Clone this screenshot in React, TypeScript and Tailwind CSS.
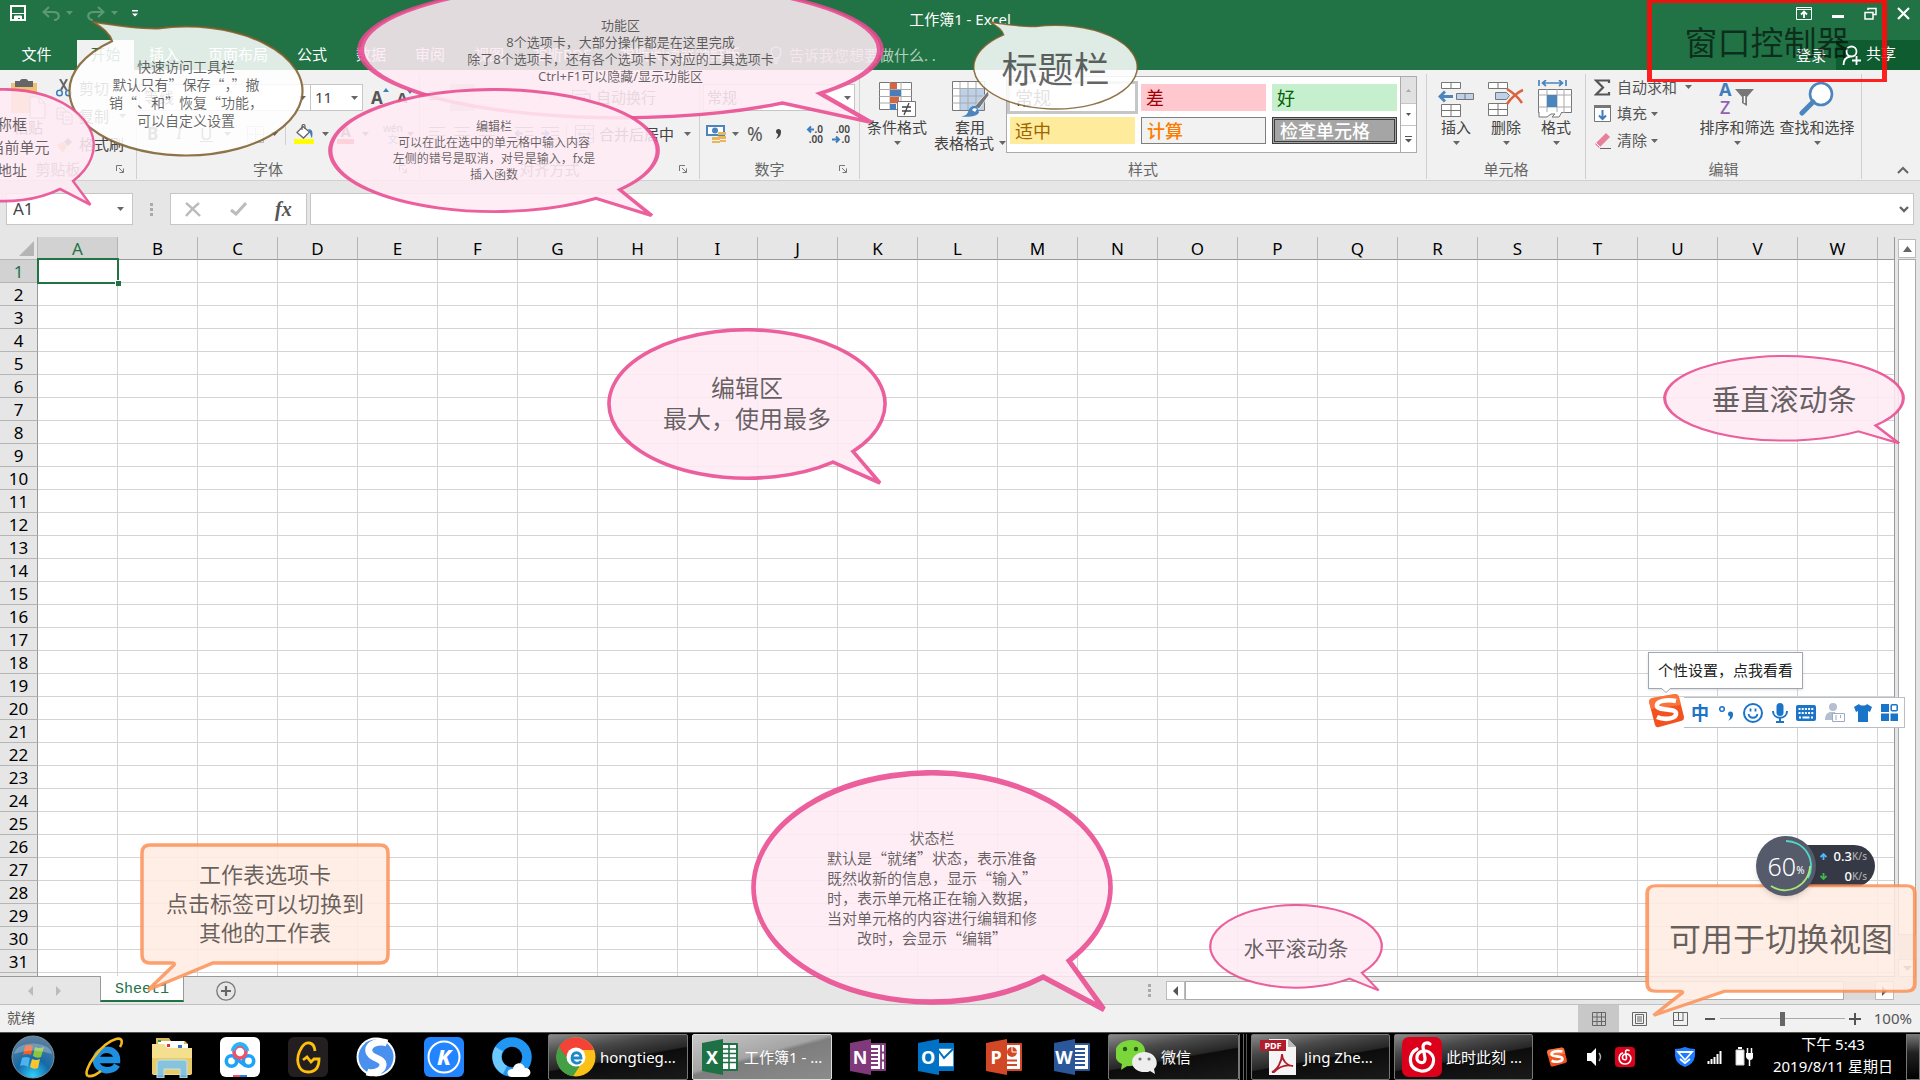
import React from "react";

const COLUMNS = "ABCDEFGHIJKLMNOPQRSTUVWXYZ".split("");
const ROWS = Array.from({ length: 32 }, (_, i) => i + 1);

/* ---------- small shared pieces ---------- */

function Svg({ w, h, vb, children, className = "" }: { w: number; h: number; vb?: string; children: React.ReactNode; className?: string }) {
  return (
    <svg width={w} height={h} viewBox={vb ?? `0 0 ${w} ${h}`} fill="none" aria-hidden="true" className={"shrink-0 " + className}>
      {children}
    </svg>
  );
}

function Caret({ className = "text-[#666]" }: { className?: string }) {
  return (
    <Svg w={7} h={4} className={className}>
      <path d="M0 0h7L3.500 4z" fill="currentColor" />
    </Svg>
  );
}

function Sep() {
  return <span className="h-[22px] w-px shrink-0 bg-[#d0d0d0]" />;
}

function Launcher() {
  return (
    <button aria-label="对话框启动器" className="flex justify-center text-[#777]">
      <Svg w={8} h={8}>
        <path d="M.5 6V.5H6M3 3l4 4M7.500 3.500v4h-4" stroke="currentColor" />
      </Svg>
    </button>
  );
}

function Group({ label, className, children, launcher = false }: { label: string; className: string; children: React.ReactNode; launcher?: boolean }) {
  return (
    <section className={"flex shrink-0 flex-col pt-1 pb-1 " + className} aria-label={label}>
      <div className="flex h-[105px] flex-col border-r border-[#d0d0d0]">
        <div className="h-[86px]">{children}</div>
        <div className="flex h-[20px] items-center text-[15px] leading-5 text-[#666]">
          <span className="flex-1 text-center">{label}</span>
          {launcher && <span className="w-5"><Launcher /></span>}
        </div>
      </div>
    </section>
  );
}

function BigButton({ icon, lines, caret = true, className = "" }: { icon: React.ReactNode; lines: string[]; caret?: boolean; className?: string }) {
  return (
    <button className={"flex shrink-0 flex-col items-center text-[15px] leading-4 text-[#444] " + className}>
      <span className="flex h-[41px] items-center justify-center">{icon}</span>
      <span className="whitespace-nowrap">{lines[0]}</span>
      <span className="flex h-4 items-center gap-[5px] whitespace-nowrap">
        {lines[1]}
        {caret && <Caret />}
      </span>
    </button>
  );
}

/* ---------- callouts ---------- */

function PinkBubble({ className, children }: { className: string; children: React.ReactNode }) {
  return (
    <div className={"absolute isolate flex flex-col items-center justify-center text-center whitespace-nowrap text-black/60 " + className}>
      <svg viewBox="0 0 280 158" preserveAspectRatio="none" fill="none" aria-hidden="true" className="absolute inset-0 -z-10 h-full w-full">
        <path
          d="M226 134.030L273 155L246 123.510A138 74.200 0 1 0 226 134.030z"
          fill="#feeaf3"
          fillOpacity=".87"
          stroke="#e84a90"
          strokeOpacity=".88"
          strokeWidth="3.600"
        />
      </svg>
      {children}
    </div>
  );
}

function WhiteBubble({ className, children }: { className: string; children: React.ReactNode }) {
  return (
    <div className={"absolute isolate flex flex-col items-center justify-center text-center whitespace-nowrap text-black/60 " + className}>
      <svg viewBox="0 0 238 137" preserveAspectRatio="none" fill="none" aria-hidden="true" className="absolute inset-0 -z-10 h-full w-full">
        <path
          d="M45 21.180Q42 11 25 1.500Q70 9 91 8.390A116.500 64.500 0 1 1 45 21.180z"
          fill="#fff"
          fillOpacity=".86"
          stroke="#7a5c28"
          strokeOpacity=".85"
          strokeWidth="2.200"
        />
      </svg>
      {children}
    </div>
  );
}

function OrangeBubble({ className, children }: { className: string; children: React.ReactNode }) {
  return (
    <div className={"absolute isolate flex flex-col items-center justify-center text-center whitespace-nowrap text-black/60 " + className}>
      <svg viewBox="0 0 250 150" preserveAspectRatio="none" fill="none" aria-hidden="true" className="absolute inset-0 -z-10 h-full w-full">
        <path
          d="M10 2H240Q248 2 248 10V112Q248 120 240 120H73L8 147L34 122Q35 120 32 120H10Q2 120 2 112V10Q2 2 10 2z"
          fill="#ffebe1"
          fillOpacity=".87"
          stroke="#fb8c50"
          strokeOpacity=".82"
          strokeWidth="3.500"
        />
      </svg>
      {children}
    </div>
  );
}

function Callouts() {
  return (
    <div className="pointer-events-none absolute inset-0 isolate overflow-hidden">
      <PinkBubble className="top-[-20px] left-[357px] h-[145px] w-[527px] pb-1 text-[13px] leading-[17px]">
        <p>功能区</p>
        <p>8个选项卡，大部分操作都是在这里完成</p>
        <p>除了8个选项卡，还有各个选项卡下对应的工具选项卡</p>
        <p>Ctrl+F1可以隐藏/显示功能区</p>
      </PinkBubble>
      <PinkBubble className="top-[88px] left-[328px] h-[130px] w-[332px] pb-1 text-[12px] leading-4">
        <p>编辑栏</p>
        <p>可以在此在选中的单元格中输入内容</p>
        <p>左侧的错号是取消，对号是输入，fx是</p>
        <p>插入函数</p>
      </PinkBubble>
      <WhiteBubble className="top-[20px] left-[67px] h-[137px] w-[238px] pt-2 font-['Noto_Sans_CJK_SC',sans-serif] text-[14px] leading-[18px]">
        <p>快速访问工具栏</p>
        <p>默认只有”保存“，”撤</p>
        <p>销“、和”恢复“功能，</p>
        <p>可以自定义设置</p>
      </WhiteBubble>
      <WhiteBubble className="top-[21px] left-[972px] h-[89px] w-[167px] pt-2 text-[36px] leading-10">
        <p>标题栏</p>
      </WhiteBubble>
      <PinkBubble className="top-[88px] left-[-86px] h-[119px] w-[181px] text-[15px] leading-[23px]">
        <p>名称框</p>
        <p>显示当前单元</p>
        <p>格地址</p>
      </PinkBubble>
      <PinkBubble className="top-[328px] left-[607px] h-[158px] w-[280px] pb-2 text-[24px] leading-[31px]">
        <p>编辑区</p>
        <p>最大，使用最多</p>
      </PinkBubble>
      <PinkBubble className="top-[355px] right-[15px] h-[90px] w-[242px] text-[29px] leading-8">
        <p>垂直滚动条</p>
      </PinkBubble>
      <PinkBubble className="bottom-[66px] left-[751px] h-[244px] w-[362px] pb-2 font-['Noto_Sans_CJK_SC',sans-serif] text-[15px] leading-5">
        <p>状态栏</p>
        <p>默认是“就绪”状态，表示准备</p>
        <p>既然收新的信息，显示“输入”</p>
        <p>时，表示单元格正在输入数据，</p>
        <p>当对单元格的内容进行编辑和修</p>
        <p>改时，会显示“编辑”</p>
      </PinkBubble>
      <PinkBubble className="right-[537px] bottom-[88px] h-[88px] w-[174px] text-[21px] leading-6">
        <p>水平滚动条</p>
      </PinkBubble>
      <OrangeBubble className="bottom-[87px] left-[140px] h-[150px] w-[250px] pb-[30px] text-[22px] leading-[29px]">
        <p>工作表选项卡</p>
        <p>点击标签可以切换到</p>
        <p>其他的工作表</p>
      </OrangeBubble>
      <OrangeBubble className="right-[3px] bottom-[62px] h-[134px] w-[272px] pb-6 text-[32px] leading-10">
        <p>可用于切换视图</p>
      </OrangeBubble>
      <div className="absolute top-0 right-[33px] flex h-[82px] w-[240px] items-center justify-center border-x-[5px] border-y-[3px] border-[#ff0a0a]/90 pt-1 text-[33px] leading-10 text-black/60">
        窗口控制器
      </div>
    </div>
  );
}

/* ---------- title bar and tabs ---------- */

function TitleBar() {
  return (
    <header className="grid h-10 grid-cols-[1fr_auto_1fr] items-start bg-[#217346] text-white">
      <div className="flex items-center pt-[5px] pl-[10px]">
        <button aria-label="保存">
          <Svg w={16} h={16}>
            <path d="M1 1h14v14H1z" stroke="#fff" strokeWidth="2" />
            <path d="M2 8.500h12M4.500 15v-4h7v4" stroke="#fff" />
            <path d="M4 11h8v5h-2v-3H8v3H4z" fill="#fff" />
          </Svg>
        </button>
        <button aria-label="撤消" className="ml-4 flex items-center gap-[6px] text-[#5c9876]">
          <Svg w={18} h={15}>
            <path d="M7 1L1.500 6L7 11M2 6h9c8 0 7 8 1 8" stroke="currentColor" strokeWidth="2.200" />
          </Svg>
          <Caret className="text-[#5c9876]" />
        </button>
        <button aria-label="恢复" className="ml-[14px] flex items-center gap-[6px] text-[#5c9876]">
          <Svg w={18} h={15}>
            <path d="M11 1l5.500 5L11 11M16 6H7c-8 0-7 8-1 8" stroke="currentColor" strokeWidth="2.200" />
          </Svg>
          <Caret className="text-[#5c9876]" />
        </button>
        <button aria-label="自定义快速访问工具栏" className="ml-[14px]">
          <Svg w={6} h={7}>
            <path d="M0 0h6v1.500H0zM0 3.500h6L3 6.500z" fill="#fff" />
          </Svg>
        </button>
      </div>
      <h1 className="pt-[9px] text-[15px] leading-5">工作簿1 - Excel</h1>
      <div className="flex items-center justify-end gap-[20px] pt-[5px] pr-[10px]">
        <button aria-label="功能区显示选项">
          <Svg w={16} h={13}>
            <path d="M.5.500h15v12H.500zM.5 2.500h15" stroke="#fff" />
            <path d="M8 11V5M5 7.500L8 4.500l3 3" stroke="#fff" strokeWidth="1.800" />
          </Svg>
        </button>
        <button aria-label="最小化">
          <Svg w={12} h={16}>
            <path d="M0 11.500h12" stroke="#fff" strokeWidth="3" />
          </Svg>
        </button>
        <button aria-label="向下还原">
          <Svg w={13} h={13}>
            <path d="M4 3V1.500h8v6H9.500M1 5.500h8V12H1z" stroke="#fff" strokeWidth="1.500" />
          </Svg>
        </button>
        <button aria-label="关闭">
          <Svg w={13} h={13}>
            <path d="M1 1l11 11M12 1L1 12" stroke="#fff" strokeWidth="2.200" />
          </Svg>
        </button>
      </div>
    </header>
  );
}

const TABS = ["插入", "页面布局", "公式", "数据", "审阅", "视图", "福昕PDF", "福昕阅读器领鲜版"];

function TabBar() {
  return (
    <nav className="flex h-[30px] items-stretch bg-[#217346] text-[15px] leading-[26px] text-white">
      <button className="w-[77px] pr-1 pb-[2px]">文件</button>
      <button className="w-[57px] bg-[#f1f1f1] pb-[2px] text-[#217346]">开始</button>
      <div className="ml-px flex gap-px">
        {TABS.map((t) => (
          <button key={t} className="px-[14px] pb-[2px] whitespace-nowrap">
            {t}
          </button>
        ))}
      </div>
      <button className="ml-4 flex items-center gap-[7px] text-[#b3d0bf]">
        <Svg w={12} h={18}>
          <path d="M3.500 12.500C3 10 1 9 1 5.800a5 5 0 0 1 10 0C11 9 9 10 8.500 12.500zM4 15h4M4.500 17.300h3" stroke="currentColor" strokeWidth="1.300" />
        </Svg>
        <span>告诉我您想要做什么. .</span>
      </button>
      <div className="ml-auto flex">
        <button className="px-[10px]">登录</button>
        <button className="flex w-[84px] items-center gap-1 bg-[#0e5c2f] pl-[6px]">
          <Svg w={20} h={21}>
            <circle cx="9.500" cy="6.500" r="5" stroke="#fff" strokeWidth="1.800" />
            <path d="M1.500 20c0-5 3-8 7-8.500M14.500 11v9M10 15.500h9" stroke="#fff" strokeWidth="1.800" />
          </Svg>
          <span className="pb-1">共享</span>
        </button>
      </div>
    </nav>
  );
}

/* ---------- ribbon icons ---------- */

const CutIcon = () => (
  <Svg w={17} h={18}>
    <path d="M4 0l6.500 11M11 0L5 11" stroke="#666" strokeWidth="2" />
    <circle cx="3.500" cy="14" r="2.800" stroke="#3f7dbd" strokeWidth="1.500" />
    <circle cx="12.500" cy="14" r="2.800" stroke="#3f7dbd" strokeWidth="1.500" />
  </Svg>
);
const CopyIcon = () => (
  <Svg w={17} h={18}>
    <path d="M1 1h6l3 3v8H1z" fill="#fff" stroke="#777" />
    <path d="M7 5h6l3 3v9H7z" fill="#fff" stroke="#777" />
    <path d="M3 5h3M3 8h3M9 10h5M9 13h5" stroke="#4a7ebb" />
  </Svg>
);
const BrushIcon = () => (
  <Svg w={17} h={17}>
    <path d="M1 9l6-3 4 4-4 7z" fill="#e8b75c" />
    <path d="M8 6l4-4 4 4-4 4z" fill="#777" />
  </Svg>
);
const PasteIcon = () => (
  <Svg w={36} h={40}>
    <path d="M1 4h26v30H1z" fill="#eec173" />
    <path d="M5 2h5c0-3 8-3 8 0h5v6H5z" fill="#666" />
    <path d="M20 18h9l6 6v15H20z" fill="#fff" stroke="#888" />
    <path d="M29 18v6h6" stroke="#888" />
  </Svg>
);
const CondIcon = () => (
  <Svg w={37} h={36}>
    <path d="M.5 1.500h32v27H.500z" fill="#fff" stroke="#777" />
    <path d="M.5 8.500h32M.5 15.500h32M.5 22h32M11 1v28M22 1v28" stroke="#aaa" />
    <path d="M11 2h7v6h-7zM11 16h9v6h-9z" fill="#d9643f" />
    <path d="M11 9h11v6H11zM11 23h6v6h-6z" fill="#4a7ebb" />
    <path d="M18.500 20.500h18v15h-18z" fill="#fff" stroke="#777" />
    <path d="M23 26h9M23 30h9M30 22l-5 12" stroke="#444" strokeWidth="1.300" />
  </Svg>
);
const TableIcon = () => (
  <Svg w={37} h={36}>
    <path d="M.5.500h32v29H.500z" fill="#fff" stroke="#777" />
    <path d="M8 8h24v21H8z" fill="#bdd2ea" />
    <path d="M.5 7.500h32M.5 15h32M.5 22h32M8 1v28M16 1v28M24 1v28" stroke="#aaa" />
    <path d="M36 10L23 25l4 3 10-14z" fill="#777" stroke="#fff" strokeWidth=".7" />
    <path d="M25 25c-6-1-8 3-9 6-1 3-4 4-7 4.500 8 1 16 0 18-4z" fill="#4a85bd" />
    <path d="M20 29c1-2 3-2 5-1l-2 3z" fill="#fff" />
  </Svg>
);
const InsertIcon = () => (
  <Svg w={36} h={36}>
    <path d="M3.500 1.500h19v6h-19zM13 1.500v6M3.500 23.500h19v12h-19zM13 23.500v12M3.500 29.500h19" fill="#fff" stroke="#777" />
    <path d="M18.500 12.500h17v6h-17z" fill="#bdd2ea" stroke="#777" />
    <path d="M27 12.500v6" stroke="#777" />
    <path d="M2 15.500h13M7 10.500l-5 5 5 5" stroke="#4a85bd" strokeWidth="2.800" />
  </Svg>
);
const DeleteIcon = () => (
  <Svg w={36} h={36}>
    <path d="M.5 1.500h19v6H.500zM10 1.500v6M.5 22.500h19v12H.500zM10 22.500v12M.5 28.500h19" fill="#fff" stroke="#777" />
    <path d="M7.500 11.500h11l3 3-3 4h-11z" fill="#bdd2ea" stroke="#777" />
    <path d="M19 8c5 3 11 8 15 14M35 9c-5 2-12 8-16 14" stroke="#d9643f" strokeWidth="2.600" />
  </Svg>
);
const FormatIcon = () => (
  <Svg w={36} h={38}>
    <path d="M1 0v6M28 0v6M4 3h21M8 0L4.500 3 8 6M21 0l3.500 3L21 6" stroke="#4a85bd" strokeWidth="1.700" />
    <path d="M.5 9.500h33v23H.500z" fill="#fff" stroke="#777" />
    <path d="M.5 15h33M.5 27h33M9 9v24M19 9v24M26 9v24" stroke="#aaa" />
    <path d="M9 15h10v12H9z" fill="#4a85bd" />
    <path d="M1 32v5h8l4-3h4l-3 3h7l3-5" fill="#fff" stroke="#777" />
  </Svg>
);
const SortIcon = () => (
  <Svg w={36} h={34}>
    <text x="0" y="14" fontSize="18" fontWeight="700" fill="#3f7dbd" fontFamily="Noto Sans, sans-serif">A</text>
    <text x="1" y="32" fontSize="18" fontWeight="500" fill="#9360b5" fontFamily="Noto Sans, sans-serif">Z</text>
    <path d="M16 7h19l-7 8v9l-5-3v-6z" fill="#777" />
    <path d="M25.500 14v7" stroke="#fff" strokeWidth="1.500" />
  </Svg>
);
const FindIcon = () => (
  <Svg w={36} h={36}>
    <circle cx="22" cy="13" r="11" fill="#fff" stroke="#4a85bd" strokeWidth="2.600" />
    <path d="M14 21L3 32" stroke="#4a85bd" strokeWidth="5" strokeLinecap="round" />
  </Svg>
);
const LinesIcon = ({ d }: { d: string }) => (
  <Svg w={16} h={14}>
    <path d={d} stroke="#777" />
  </Svg>
);
const IndentIcon = ({ flip = false }: { flip?: boolean }) => (
  <Svg w={18} h={14}>
    <path d="M0 .500h18M10 4.500h8M10 8.500h8M0 12.500h18" stroke="#777" />
    <path d={flip ? "M0 6.500h7M4 3.500l3.500 3L4 9.500" : "M8 6.500H1M4 3.500L.5 6.500l3.500 3"} stroke="#3f7dbd" strokeWidth="1.800" />
  </Svg>
);

function Clipboard() {
  return (
    <Group label="剪贴板" className="w-[137px]" launcher>
      <div className="flex">
        <BigButton className="w-[56px] pt-[4px]" caret={false} icon={<PasteIcon />} lines={["粘贴", ""]} />
        <div className="flex flex-col text-[15px] text-[#444]">
          <button className="flex h-[28px] items-center gap-[6px]"><CutIcon />剪切</button>
          <button className="flex h-[28px] items-center gap-[6px]"><CopyIcon />复制 <span className="ml-1"><Caret /></span></button>
          <button className="flex h-[28px] items-center gap-[6px] whitespace-nowrap"><BrushIcon />格式刷</button>
        </div>
      </div>
    </Group>
  );
}

function FontGroup() {
  return (
    <Group label="字体" className="w-[283px]" launcher>
      <div className="flex h-[47px] items-center pl-[2px]">
        <button className="flex h-[27px] w-[172px] items-center justify-between border border-[#c6c6c6] bg-white px-1 text-[15px] text-[#444]">等线 <Caret /></button>
        <button className="-ml-px flex h-[27px] w-[53px] items-center justify-between border border-[#c6c6c6] bg-white px-1 text-[15px] text-[#444]">11 <Caret /></button>
        <button className="ml-2 flex w-[18px] text-[17px] font-bold text-[#555]">A<Svg w={6} h={4} className="mt-[3px]"><path d="M0 4h6L3 0z" fill="#3f7dbd" /></Svg></button>
        <button className="ml-2 flex w-[18px] text-[15px] font-bold text-[#555]">A<Svg w={6} h={4} className="mt-1"><path d="M0 0h6L3 4z" fill="#3f7dbd" /></Svg></button>
      </div>
      <div className="flex h-[26px] items-center text-[17px] text-[#555]">
        <button className="ml-[10px] font-bold">B</button>
        <button className="ml-[18px] font-serif italic">I</button>
        <button className="mr-3 ml-[18px] underline">U</button>
        <Caret />
        <span className="mx-2"><Sep /></span>
        <Svg w={17} h={17}><path d="M.5.500h16v16H.500zM8.500 0v17M0 8.500h17" stroke="#888" strokeDasharray="1 1" /></Svg>
        <span className="mx-[7px]"><Caret /></span>
        <Sep />
        <span className="mr-2 ml-2">
          <Svg w={20} h={20}>
            <path d="M9 2.500l6.500 5.500-6 6L3 8.500z" fill="#fff" stroke="#666" strokeWidth="1.300" />
            <path d="M8 6V2c0-2 3-2 3 0v3" stroke="#666" strokeWidth="1.200" />
            <path d="M14 5c5 0 5 4 4 9-2-2-1-5-4-9z" fill="#3f7dbd" />
            <path d="M0 15h20v5H0z" fill="#ff0" />
          </Svg>
        </span>
        <Caret />
        <span className="mx-[8px] border-b-[5px] border-[#f33] px-[3px] text-[15px] leading-[15px] font-bold">A</span>
        <Caret />
        <span className="mx-[7px]"><Sep /></span>
        <span className="flex w-[20px] flex-col items-center text-[10px] leading-[11px]"><span>wén</span><span className="text-[#3f7dbd]">文</span></span>
        <span className="ml-1"><Caret /></span>
      </div>
    </Group>
  );
}

function AlignGroup() {
  return (
    <Group label="对齐方式" className="w-[280px]" launcher>
      <div className="flex h-[47px] items-center pl-[9px] text-[15px] text-[#555]">
        <LinesIcon d="M0 .500h16M3 4.500h10M0 8.500h16" />
        <span className="mx-[5px] flex h-[27px] w-[25px] items-center justify-center bg-[#cdcdcd]"><LinesIcon d="M0 3.500h16M3 7.500h10M0 11.500h16" /></span>
        <LinesIcon d="M0 5.500h16M3 9.500h10M0 13.500h16" />
        <span className="mx-2"><Sep /></span>
        <Svg w={18} h={16}><path d="M2 14L15 3M15 3h-5M15 3v5M1 8l5-5" stroke="#888" strokeWidth="1.300" /></Svg>
        <span className="mx-2"><Caret /></span>
        <span className="ml-3"><Sep /></span>
        <span className="mr-[5px] ml-[7px]">
          <Svg w={19} h={18}><path d="M.5 1v16M0 1.500h15M3 5.500h9M3 9.500h6" stroke="#888" /><path d="M12 5h6v6h-7M13 8l-3 3 3 3" stroke="#3f7dbd" strokeWidth="1.500" /></Svg>
        </span>
        <span>自动换行</span>
      </div>
      <div className="flex h-[26px] items-center pl-[9px] text-[15px] text-[#444]">
        <LinesIcon d="M0 .500h16M0 4.500h10M0 8.500h16M0 12.500h10" />
        <span className="mx-[9px]"><LinesIcon d="M0 .500h16M3 4.500h10M0 8.500h16M3 12.500h10" /></span>
        <LinesIcon d="M0 .500h16M6 4.500h10M0 8.500h16M6 12.500h10" />
        <span className="mx-[10px]"><Sep /></span>
        <IndentIcon />
        <span className="mr-[7px] ml-2"><IndentIcon flip /></span>
        <Sep />
        <span className="mr-[5px] ml-2">
          <Svg w={19} h={18}><path d="M.5.500h18v17H.500zM0 4.500h19M0 13.500h19M9.500 0v4M9.500 14v4" stroke="#888" /><path d="M3 9h13M6 6.500L3.500 9 6 11.500M13 6.500L15.500 9 13 11.500" stroke="#3f7dbd" /></Svg>
        </span>
        <span className="mr-[10px] whitespace-nowrap">合并后居中</span>
        <Caret />
      </div>
    </Group>
  );
}

function DecimalIcon({ top, bottom, flip = false }: { top: string; bottom: string; flip?: boolean }) {
  return (
    <Svg w={20} h={19}>
      <text x={flip ? 19 : 17} y="8" textAnchor="end" fontSize="10" fontWeight="600" fill="#444" fontFamily="Noto Sans, sans-serif">{top}</text>
      <text x={flip ? 19 : 17} y="18" textAnchor="end" fontSize="10" fontWeight="600" fill="#444" fontFamily="Noto Sans, sans-serif">{bottom}</text>
      <path d={flip ? "M1 14.500h7M5 11.500l3 3-3 3" : "M8 4.500H2M5 1.500l-3 3 3 3"} stroke="#3f7dbd" strokeWidth="2" />
    </Svg>
  );
}

function NumberGroup() {
  return (
    <Group label="数字" className="w-[160px]" launcher>
      <div className="flex h-[47px] items-center pl-[3px]">
        <button className="flex h-[27px] w-[152px] items-center justify-between border border-[#c6c6c6] bg-white px-[3px] text-[15px] text-[#444]">常规 <Caret /></button>
      </div>
      <div className="flex h-[26px] items-center pl-[6px] text-[#555]">
        <Svg w={20} h={20}>
          <path d="M0 1h19v11H0z" fill="#4a85bd" />
          <path d="M2 3h15v7H2z" fill="#fff" /><circle cx="9" cy="6.500" r="3" fill="#4a85bd" />
          <path d="M12 8h8v3h-8zM12 12h8v3h-8zM6 13h8v3H6zM6 17h8v2H6zM14 16h6v2h-6z" fill="#e8b75c" />
        </Svg>
        <span className="mr-[8px] ml-[6px]"><Caret /></span>
        <span className="text-[19px] leading-6">%</span>
        <Svg w={7} h={12} className="ml-3"><path d="M1 3.500a2.500 2.500 0 1 1 5 0C6 8 4 10 1 11c1-1.500 2-3 2-5C2 6 1 5 1 3.500z" fill="#444" /></Svg>
        <span className="mx-[12px]"><Sep /></span>
        <DecimalIcon top=".0" bottom=".00" />
        <span className="ml-[5px]"><DecimalIcon top=".00" bottom=".0" flip /></span>
      </div>
    </Group>
  );
}

function StylesGroup() {
  const cell = "flex h-[27px] w-[125px] items-center pl-[5px] text-[18px] leading-6 ";
  return (
    <Group label="样式" className="w-[567px]">
      <div className="flex">
        <BigButton className="w-[74px] pt-1" icon={<CondIcon />} lines={["条件格式", ""]} />
        <BigButton className="w-[72px] pt-1" icon={<TableIcon />} lines={["套用", "表格格式"]} />
        <div className="mt-[2px] flex h-[77px] border border-[#ababab] bg-white">
          <div className="grid grid-cols-3 content-start gap-[6px] pt-[7px] pr-[3px] pl-[3px]">
            <button className={cell + "bg-white text-[#333] outline-3 outline-[#c6c6c6]"}>常规</button>
            <button className={cell + "bg-[#ffc7ce] text-[#9c0006]"}>差</button>
            <button className={cell + "bg-[#c6efce] text-[#006100]"}>好</button>
            <button className={cell + "bg-[#ffeb9c] text-[#9c6500]"}>适中</button>
            <button className={cell + "border border-[#7f7f7f] bg-[#f2f2f2] font-medium text-[#fa7d00]"}>计算</button>
            <button className={cell + "border-[3px] border-double border-[#3f3f3f] bg-[#a5a5a5] pl-[2px] font-medium text-white"}>检查单元格</button>
          </div>
          <div className="flex w-4 flex-col border-l border-[#ababab]">
            <button aria-label="上一行" className="flex h-[26px] items-center justify-center bg-[#e1e1e1]"><Svg w={5} h={3}><path d="M0 3h5L2.500 0z" fill="#aaa" /></Svg></button>
            <button aria-label="下一行" className="flex h-[23px] items-center justify-center border-y border-[#c6c6c6]"><Svg w={5} h={3}><path d="M0 0h5L2.500 3z" fill="#555" /></Svg></button>
            <button aria-label="其他" className="flex flex-1 items-center justify-center"><Svg w={7} h={7}><path d="M0 0h7v1H0zM0 3h7L3.500 6.500z" fill="#555" /></Svg></button>
          </div>
        </div>
      </div>
    </Group>
  );
}

function Ribbon() {
  return (
    <div className="flex h-[111px] overflow-hidden border-b border-[#d0d0d0] bg-[#f1f1f1]">
      <Clipboard />
      <FontGroup />
      <AlignGroup />
      <NumberGroup />
      <StylesGroup />
      <Group label="单元格" className="w-[159px]">
        <div className="flex pl-1">
          <BigButton className="w-[50px] pt-1" icon={<InsertIcon />} lines={["插入", ""]} />
          <BigButton className="w-[50px] pt-1" icon={<DeleteIcon />} lines={["删除", ""]} />
          <BigButton className="w-[50px] pt-1" icon={<FormatIcon />} lines={["格式", ""]} />
        </div>
      </Group>
      <Group label="编辑" className="w-[276px]">
        <div className="flex">
          <div className="flex w-[111px] flex-col pl-2 text-[15px] whitespace-nowrap text-[#555]">
            <button className="flex h-[26px] items-center">
              <Svg w={17} h={17} className="mr-[6px]"><path d="M15 4V1.500H2L9 8.500 2 15.500h13V13" stroke="#555" strokeWidth="2.200" /></Svg>
              自动求和<span className="ml-2"><Caret /></span>
            </button>
            <button className="flex h-[27px] items-center">
              <Svg w={17} h={17} className="mr-[6px]"><path d="M.5.500h16v16H.500z" fill="#fff" stroke="#777" /><path d="M0 0h17v3H0z" fill="#777" /><path d="M8.500 5v9M5 10.500l3.500 3.500 3.500-3.500" stroke="#3f7dbd" strokeWidth="2" /></Svg>
              填充<span className="ml-1"><Caret /></span>
            </button>
            <button className="flex h-[27px] items-center">
              <Svg w={17} h={17} className="mr-[6px]"><path d="M1 12L12 1l4 4L5 16z" fill="#e8809a" /><path d="M2 11l4 4" stroke="#fff" /><path d="M6 16.500h11" stroke="#666" /></Svg>
              清除<span className="ml-1"><Caret /></span>
            </button>
          </div>
          <BigButton className="w-[80px] pt-1" icon={<SortIcon />} lines={["排序和筛选", ""]} />
          <BigButton className="w-[80px] pt-1" icon={<FindIcon />} lines={["查找和选择", ""]} />
        </div>
      </Group>
      <div className="flex flex-1 items-end justify-end pr-[11px] pb-[6px]">
        <button aria-label="折叠功能区"><Svg w={12} h={8}><path d="M1 7l5-5 5 5" stroke="#666" strokeWidth="2" /></Svg></button>
      </div>
    </div>
  );
}

/* ---------- formula bar ---------- */

function FormulaBar() {
  return (
    <div className="flex items-stretch bg-[#e6e6e6] px-[6px] py-3">
      <div className="flex h-8 w-[127px] items-center border border-[#c6c6c6] bg-white pr-2">
        <input aria-label="名称框" defaultValue="A1" className="w-full min-w-0 bg-transparent pl-[6px] text-[17px] leading-6 text-[#444] outline-none" />
        <Caret />
      </div>
      <span className="flex w-[37px] flex-col items-center justify-center gap-[2px]">
        <i className="h-[3px] w-[3px] bg-[#aaa]" /><i className="h-[3px] w-[3px] bg-[#aaa]" /><i className="h-[3px] w-[3px] bg-[#aaa]" />
      </span>
      <div className="flex h-8 w-[137px] items-center justify-around border border-[#c6c6c6] bg-white">
        <button aria-label="取消"><Svg w={16} h={15}><path d="M1 1c5 4 9 8 14 13M14 1C9 5 5 9 1 14" stroke="#bbb" strokeWidth="2.400" /></Svg></button>
        <button aria-label="输入"><Svg w={17} h={14}><path d="M1 8l5 4L16 1" stroke="#bbb" strokeWidth="3" /></Svg></button>
        <button className="font-['Liberation_Serif',serif] text-[20px] leading-6 font-bold text-[#555] italic">fx</button>
      </div>
      <div className="ml-[3px] flex h-8 flex-1 items-center border border-[#c6c6c6] bg-white pr-1">
        <input aria-label="编辑栏" className="min-w-0 flex-1 bg-transparent px-2 outline-none" />
        <Svg w={10} h={7}><path d="M1 1l4 4 4-4" stroke="#666" strokeWidth="2.400" /></Svg>
      </div>
    </div>
  );
}

/* ---------- worksheet ---------- */

function Sheet() {
  return (
    <main className="flex min-h-0 flex-1 bg-[#e6e6e6]">
      <div className="min-w-0 flex-1 overflow-hidden border-r border-b border-[#999]">
        <table className="w-[2118px] table-fixed border-separate border-spacing-0 bg-white text-[17px] leading-[21px] text-black">
          <colgroup>
            <col className="w-[38px]" />
            {COLUMNS.map((c) => <col key={c} className="w-[80px]" />)}
          </colgroup>
          <thead>
            <tr>
              <th aria-label="全选" className="h-[23px] border-r border-b border-[#b5b5b5] bg-[#e6e6e6] p-0">
                <Svg w={15} h={15} className="ml-[19px]"><path d="M15 0v15H0z" fill="#b5b5b5" /></Svg>
              </th>
              {COLUMNS.map((c) => (
                <th
                  key={c}
                  scope="col"
                  className={
                    "h-[23px] border-r border-b p-0 font-normal " +
                    (c === "A" ? "border-r-[#b5b5b5] border-b-[#217346] bg-[#d2d2d2] text-[#217346]" : "border-r-[#b5b5b5] border-b-[#999] bg-[#e6e6e6]")
                  }
                >
                  {c}
                </th>
              ))}
            </tr>
          </thead>
          <tbody>
            {ROWS.map((r) => (
              <tr key={r}>
                <th
                  scope="row"
                  className={
                    "h-[23px] border-r border-b p-0 font-normal " +
                    (r === 1 ? "border-r-[#217346] border-b-[#b5b5b5] bg-[#d2d2d2] text-[#217346]" : "border-r-[#999] border-b-[#b5b5b5] bg-[#e6e6e6]")
                  }
                >
                  {r}
                </th>
                {COLUMNS.map((c) => (
                  <td key={c} className="relative h-[23px] border-r border-b border-[#d4d4d4] p-0">
                    {r === 1 && c === "A" && (
                      <span className="absolute -top-[2px] -right-[2px] -bottom-[2px] -left-px z-10 border-2 border-[#217346]">
                        <span className="absolute -right-[4px] -bottom-[4px] h-[6px] w-[6px] border-t border-l border-white bg-[#217346]" />
                      </span>
                    )}
                  </td>
                ))}
              </tr>
            ))}
          </tbody>
        </table>
      </div>
      <div className="flex w-[25px] flex-col pt-[2px] pr-1 pl-[3px]">
        <button aria-label="向上滚动" className="flex h-[19px] items-center justify-center border border-[#bbb] bg-white"><Svg w={9} h={6}><path d="M0 6h9L4.500 0z" fill="#666" /></Svg></button>
        <div className="mt-px flex-1 border border-[#ababab] bg-white" />
        <div className="h-[24px] bg-[#dadada]" />
        <button aria-label="向下滚动" className="flex h-[18px] items-center justify-center border border-[#bbb] bg-white"><Svg w={9} h={5}><path d="M0 0h9L4.500 5z" fill="#666" /></Svg></button>
      </div>
    </main>
  );
}

function SheetTabs() {
  return (
    <div className="flex h-[28px] items-start border-b border-[#c0c0c0] bg-[#e6e6e6]">
      <div className="flex h-[27px] w-[100px] items-center gap-[23px] pl-7">
        <button aria-label="上一个工作表"><Svg w={5} h={10}><path d="M5 0v10L0 5z" fill="#bbb" /></Svg></button>
        <button aria-label="下一个工作表"><Svg w={5} h={10}><path d="M0 0v10l5-5z" fill="#bbb" /></Svg></button>
      </div>
      <button className="-mt-px flex h-[26px] w-[84px] items-end justify-center border-x border-b-2 border-x-[#999] border-b-[#217346] bg-white font-['Liberation_Mono',monospace] text-[15px] leading-5 text-[#217346]">Sheet1</button>
      <button aria-label="新工作表" className="mt-1 ml-8">
        <Svg w={20} h={20}><circle cx="10" cy="10" r="9.200" stroke="#777" strokeWidth="1.300" /><path d="M10 5v10M5 10h10" stroke="#666" strokeWidth="2.200" /></Svg>
      </button>
      <div className="ml-auto flex h-[27px] w-[773px] items-center pr-[26px]">
        <span className="flex w-4 flex-col items-start gap-[2px] pl-[1px]"><i className="h-[3px] w-[3px] bg-[#aaa]" /><i className="h-[3px] w-[3px] bg-[#aaa]" /><i className="h-[3px] w-[3px] bg-[#aaa]" /></span>
        <span className="w-[3px]" />
        <button aria-label="向左滚动" className="flex h-[19px] w-[19px] items-center justify-center border border-[#bbb] bg-white"><Svg w={5} h={10}><path d="M5 0v10L0 5z" fill="#555" /></Svg></button>
        <div className="h-[19px] flex-1 border border-[#ababab] bg-white" />
        <div className="h-[19px] w-[31px] bg-[#dadada]" />
        <button aria-label="向右滚动" className="flex h-[19px] w-[19px] items-center justify-center border border-[#bbb] bg-white"><Svg w={5} h={10}><path d="M0 0v10l5-5z" fill="#555" /></Svg></button>
      </div>
    </div>
  );
}

function StatusBar() {
  return (
    <footer className="flex h-[27px] items-center bg-[#f1f1f1] text-[14px] leading-5 text-[#555]">
      <span className="pb-[2px] pl-[7px]">就绪</span>
      <div className="ml-auto flex h-full items-center pr-2">
        <button aria-label="普通" className="flex h-full w-[41px] items-center justify-center bg-[#c8c8c8]"><Svg w={14} h={14}><path d="M.5.500h13v13H.500zM5 0v14M9.500 0v14M0 5h14M0 9.500h14" stroke="#666" /></Svg></button>
        <button aria-label="页面布局" className="flex w-[41px] justify-center"><Svg w={15} h={14}><path d="M.5.500h14v13H.500zM3.500 2.500h8v9h-8zM5 5h5M5 7h5M5 9h5" stroke="#666" /></Svg></button>
        <button aria-label="分页预览" className="flex w-[41px] justify-center"><Svg w={15} h={14}><path d="M.5.500h14v13H.500zM5.500 0v9M10 0v9M0 8.500h10" stroke="#666" /></Svg></button>
        <button aria-label="缩小" className="ml-1"><Svg w={11} h={12}><path d="M0 6h10" stroke="#555" strokeWidth="2" /></Svg></button>
        <input
          type="range"
          aria-label="显示比例"
          defaultValue={50}
          className="mx-1 h-[14px] w-[125px] appearance-none bg-[linear-gradient(#aaa,#aaa)] bg-[length:100%_1px] bg-center bg-no-repeat [&::-webkit-slider-thumb]:h-[14px] [&::-webkit-slider-thumb]:w-[5px] [&::-webkit-slider-thumb]:appearance-none [&::-webkit-slider-thumb]:bg-[#666]"
        />
        <button aria-label="放大"><Svg w={12} h={12}><path d="M0 6h12M6 0v12" stroke="#555" strokeWidth="2" /></Svg></button>
        <span className="w-[51px] pb-[2px] text-right text-[15px]">100%</span>
      </div>
    </footer>
  );
}

/* ---------- floating widgets ---------- */

function SogouLogo({ size }: { size: number }) {
  return (
    <Svg w={size} h={size} vb="0 0 35 35">
      <path d="M3 5L26 1q3 0 4 3l5 20q0 3-3 4L10 34q-3 1-4-2L0 9q0-3 3-4z" fill="#f4511e" />
      <path d="M3 5L26 1q3 0 4 3l2 8L2 16 0 9q0-3 3-4z" fill="#ff8a4c" fillOpacity=".6" />
      <path d="M27 8C18 6 7 8 8 13s18 2 19 7-10 8-19 4" stroke="#fff" strokeWidth="4.600" />
    </Svg>
  );
}

function ImeBar() {
  return (
    <div className="absolute right-[15px] bottom-[352px] flex w-[256px] flex-col items-start">
      <div className="relative mb-[4px] -ml-px flex h-[37px] w-[155px] items-center justify-center border border-[#9fa8b0] bg-white pb-[2px] text-[15px] leading-5 whitespace-nowrap text-[#222] shadow">
        个性设置，点我看看
        <Svg w={10} h={6} className="absolute top-[34px] left-[12px]"><path d="M0 1l5 4.500L10 1V0H0z" fill="#fff" /><path d="M0 1l5 4.500L10 1" stroke="#9fa8b0" /></Svg>
      </div>
      <div className="flex items-center">
        <SogouLogo size={35} />
        <div className="mt-1 flex h-[31px] w-[221px] items-center justify-between border border-l-0 border-[#b8bec8] bg-white pr-[6px] pl-[7px] text-[#1a74c8]">
          <span className="text-[18px] leading-6 font-bold">中</span>
          <Svg w={16} h={16}><circle cx="4" cy="4" r="2.300" stroke="currentColor" strokeWidth="1.500" /><path d="M10 9a2.500 2.500 0 1 1 5 0c0 4-2 6-5 6.500 1.500-1 2-2 2-4-1 0-2-1-2-2.500z" fill="currentColor" /></Svg>
          <Svg w={20} h={20}><circle cx="10" cy="10" r="9" stroke="currentColor" strokeWidth="2" /><path d="M5.500 11c1 5 8 5 9 0M7.500 5.500v3M12.500 5.500v3" stroke="currentColor" strokeWidth="1.800" /></Svg>
          <Svg w={16} h={20}><rect x="4.500" y="0" width="7" height="13" rx="3.500" fill="currentColor" /><path d="M1 8c0 9 14 9 14 0M8 15v4M4 19h8" stroke="currentColor" strokeWidth="2" /></Svg>
          <Svg w={20} h={16}><rect width="20" height="16" rx="2" fill="currentColor" /><path d="M2.500 4h15M2.500 8h15" stroke="#fff" strokeWidth="2" strokeDasharray="2 1.200" /><path d="M3 12.500h2M6.500 12.500h7M15 12.500h2" stroke="#fff" strokeWidth="2" /></Svg>
          <Svg w={20} h={19}><circle cx="8" cy="4" r="4" fill="#b4bfd2" /><path d="M0 17c0-6 3-8 6-8h4v8z" fill="#b4bfd2" /><path d="M7.500 10.500h12v8h-12zM11 12v5M15.500 12v3" fill="#fff" stroke="#9dabc4" /></Svg>
          <Svg w={18} h={18}><path d="M5 0c1 2 7 2 8 0l5 3-2 5-2-1v11H4V7L2 8 0 3z" fill="currentColor" /></Svg>
          <Svg w={17} h={17}><path d="M0 0h8v8H0zM0 9.500h8V17H0zM9.500 9.500H17V17H9.500z" fill="currentColor" /><rect x="10.200" y=".8" width="6" height="6" rx="1" stroke="currentColor" strokeWidth="1.500" /></Svg>
        </div>
      </div>
    </div>
  );
}

function SpeedWidget() {
  return (
    <div className="absolute right-[45px] bottom-[184px] flex items-center text-white">
      <div className="z-10 -mr-[34px] flex h-[60px] w-[60px] items-center justify-center rounded-full bg-[#565b6b] shadow-md">
        <svg viewBox="0 0 60 60" fill="none" aria-hidden="true" className="absolute top-0 left-0 h-[60px] w-[60px]">
          <path d="M30 5a25 25 0 0 1 22 37" stroke="#4fd8c8" strokeWidth="1.800" />
          <path d="M54 30a25 25 0 0 1-39 20" stroke="#a8e878" strokeWidth="1.800" />
        </svg>
        <span className="text-[25px] leading-8 font-light">60</span>
        <span className="mt-2 text-[10px] leading-4">%</span>
      </div>
      <div className="flex h-[42px] w-[93px] flex-col justify-center rounded-r-full bg-[#353945] pr-2 pl-[38px] text-[13px] leading-5 font-medium">
        <div className="flex items-center"><Svg w={7} h={7}><path d="M3.500 7V1M.5 4l3-3 3 3" stroke="#4db8ff" strokeWidth="1.800" /></Svg><span className="ml-auto">0.3</span><span className="text-[10px] text-[#aaa]">K/s</span></div>
        <div className="flex items-center"><Svg w={7} h={7}><path d="M3.500 0v6M.5 3l3 3 3-3" stroke="#3db84a" strokeWidth="1.800" /></Svg><span className="ml-auto">0</span><span className="text-[10px] text-[#aaa]">K/s</span></div>
      </div>
    </div>
  );
}

/* ---------- taskbar ---------- */

const taskButton = "flex h-[46px] items-center gap-1 rounded-[2px] border text-[15px] leading-5 whitespace-nowrap text-white ";
const darkGlass = "border-[#777] bg-[linear-gradient(170deg,#8a8a8a_0%,#4a4a4a_28%,#262626_52%,#0c0c0c_54%,#1a1a1a_100%)] ";
const lightGlass = "border-[#ddd] bg-[linear-gradient(165deg,#c8c8c8_0%,#a5a5a5_45%,#7e7e7e_50%,#8b8b8b_100%)] ";

function OfficeIcon({ letter, color, kind }: { letter: string; color: string; kind: string }) {
  return (
    <Svg w={36} h={36}>
      <path d="M20 4h15q1 0 1 1v26q0 1-1 1H20z" fill={color} />
      {kind === "outlook" ? (
        <>
          <path d="M20 9h16v19H20z" fill="#fff" stroke={color} strokeWidth="1.500" />
          <path d="M20 11l6 8 9-9" stroke={color} strokeWidth="2" />
        </>
      ) : (
        <path d="M20 6h14v24H20z" fill="#fff" />
      )}
      {kind === "grid" && <path d="M20 10h14M20 14.500h14M20 19h14M20 23.500h14M27 6v24" stroke={color} strokeWidth="1.600" />}
      {kind === "lines" && <path d="M20 10h11M20 14h11M20 18h11M20 22h11M20 26h11" stroke={color} strokeWidth="1.800" />}
      {kind === "note" && <path d="M20 10h8M20 14h8M20 18h8M20 22h8M20 26h8M31 6v24M31 13.500h4M31 21.500h4" stroke={color} strokeWidth="1.800" />}
      {kind === "chart" && <><circle cx="26" cy="13" r="5" fill={color} /><path d="M26 8v5h5M20 22h11M20 26h11" stroke="#fff" strokeWidth="1" /><path d="M20 21.500h11M20 26h11" stroke={color} strokeWidth="2" /></>}
      <path d="M0 4l21-4v36L0 32z" fill={color} />
      <text x="10" y="25" textAnchor="middle" fontSize="18" fontWeight="700" fill="#fff" fontFamily="Noto Sans, sans-serif">{letter}</text>
    </Svg>
  );
}

function NeteaseIcon({ size }: { size: number }) {
  return (
    <Svg w={size} h={size} vb="0 0 40 40">
      <rect width="40" height="40" rx="7" fill="#dd001b" />
      <path d="M15 12c-9 4-10 20 4 22 12 1 17-13 8-19-5-3-13 0-12 7 1 5 9 5 8-1L21 10c0-4 4-5 7-3" stroke="#fff" strokeWidth="3.200" strokeLinecap="round" />
    </Svg>
  );
}

function Taskbar() {
  return (
    <nav aria-label="任务栏" className="flex h-12 items-center border-t border-[#555] bg-black text-white">
      <div className="flex items-center gap-[28px] pl-[11px]">
        <button aria-label="开始菜单">
          <Svg w={44} h={44}>
            <defs>
              <radialGradient id="orb" cx=".5" cy=".95" r=".9"><stop offset="0" stopColor="#2fd0ff" /><stop offset=".45" stopColor="#136aa8" /><stop offset="1" stopColor="#5c7f9c" /></radialGradient>
            </defs>
            <circle cx="22" cy="22" r="21" fill="url(#orb)" stroke="#7e93a5" />
            <path d="M14 11q4-2 8 0l-2 9q-4-2-8 0z" fill="#f0602a" /><path d="M24 12q4 2 9 0l-3 10q-4 2-8-1z" fill="#8cc63f" />
            <path d="M11 23q4-2 8 0l-2 9q-4-3-8-1z" fill="#4db3ee" /><path d="M21 24q4 2 8 0l-2 9q-4 2-8-1z" fill="#fcc52c" />
            <path d="M3 19C5 5 39 5 41 19q-19-7-38 0z" fill="#fff" fillOpacity=".25" />
          </Svg>
        </button>
        <button aria-label="Internet Explorer">
          <Svg w={42} h={42}>
            <path d="M34 29C30 37 13 36 13 24c0-13 21-14 21 0H15" stroke="#1f8fe0" strokeWidth="6.500" />
            <path d="M5 40C-2 36 18 7 33 3c8-2 6 5 4 8" stroke="#f2b81f" strokeWidth="2.600" />
            <path d="M5 40c5 1 9-2 13-5" stroke="#f2b81f" strokeWidth="2.600" />
          </Svg>
        </button>
        <button aria-label="资源管理器" className="-ml-px">
          <Svg w={40} h={42}>
            <path d="M4 2h13l2 3h14l3 3v6H4z" fill="#d9b95a" /><path d="M6 5h26v6H6zM14 8h22v6H14z" fill="#fff" />
            <path d="M6 4h3v2H6z" fill="#2e9e4a" /><path d="M15 8h3v3h-3z" fill="#d33" /><path d="M26 9h4v3h-4z" fill="#37c" />
            <path d="M0 8h12l3 4h25v25q0 2-2 2H2q-2 0-2-2z" fill="#f3df8d" /><path d="M0 22h40v16H0z" fill="#e8cb68" />
            <path d="M5 42V27q0-3 3-3h24q3 0 3 3v15h-7v-9H12v9z" fill="#7cc3e8" fillOpacity=".9" stroke="#bfe3f5" />
          </Svg>
        </button>
        <button aria-label="百度网盘">
          <Svg w={40} h={40}>
            <rect width="40" height="40" rx="6" fill="#fff" />
            <circle cx="11.500" cy="24" r="5.200" stroke="#1fa4f5" strokeWidth="3.600" /><circle cx="28.500" cy="24" r="5.200" stroke="#1fa4f5" strokeWidth="3.600" />
            <path d="M14 20l12 9" stroke="#1fa4f5" strokeWidth="3.600" />
            <circle cx="20" cy="15" r="6" fill="#fff" stroke="#f0506e" strokeWidth="3.600" /><path d="M13 14a7 7 0 0 1 14 0" stroke="#28b4f8" strokeWidth="4" />
            <path d="M13 38h7v2h-7z" fill="#f0506e" /><path d="M20 38h7v2h-7z" fill="#2480f0" />
          </Svg>
        </button>
        <button aria-label="游戏平台">
          <Svg w={40} h={40}>
            <rect width="40" height="40" rx="6" fill="#231f20" />
            <path d="M27 14C26 4 18 4 14 10 6 22 10 35 20 35c9 0 11-7 11-13h-5l-3 3-4-5-4 3" stroke="#fdc10d" strokeWidth="2.800" />
          </Svg>
        </button>
        <button aria-label="搜狗浏览器">
          <Svg w={40} h={40}>
            <circle cx="20" cy="20" r="19.500" fill="#fff" /><circle cx="20" cy="20" r="17.500" fill="#4a90ee" />
            <path d="M31 6C23 3 11 7 13 15c2 7 15 6 14 13-1 7-11 9-16 7" stroke="#fff" strokeWidth="7" />
          </Svg>
        </button>
        <button aria-label="酷狗音乐">
          <Svg w={40} h={40}>
            <rect width="40" height="40" rx="6" fill="#2285ff" /><circle cx="20" cy="20" r="15.500" stroke="#fff" strokeWidth="2" />
            <text x="20" y="28" textAnchor="middle" fontSize="22" fontWeight="800" fontStyle="italic" fill="#fff" fontFamily="Noto Sans, sans-serif">K</text>
          </Svg>
        </button>
        <button aria-label="QQ浏览器">
          <Svg w={40} h={40}>
            <circle cx="20" cy="20" r="15" stroke="#2196f3" strokeWidth="9.500" /><path d="M7 12a15 15 0 0 0 6 21" stroke="#6cc8ff" strokeWidth="9" />
            <path d="M20 40c-7-1-5-9 1-8 1-7 10-8 12-1 6-1 8 8 1 9z" fill="#fff" />
          </Svg>
        </button>
      </div>
      <button className={taskButton + darkGlass + "ml-4 w-[140px] pl-[7px]"}>
        <Svg w={40} h={40}>
          <circle cx="20" cy="20" r="19.500" fill="#fbc116" />
          <path d="M20 20L3 10a19.500 19.500 0 0 0 14 29.300l6-9z" fill="#43a047" />
          <path d="M3 10a19.500 19.500 0 0 1 35 3H20l-8 9z" fill="#f44336" />
          <circle cx="20" cy="20" r="9.500" fill="#fff" /><path d="M25 24c-3 4-9 2-9-3 0-7 9-7 9 0h-9" stroke="#1e88c8" strokeWidth="2.800" />
        </Svg>
        hongtieg...
      </button>
      <button className={taskButton + lightGlass + "ml-1 w-[140px] pl-[9px]"}>
        <OfficeIcon letter="X" color="#1e7145" kind="grid" />
        <span className="ml-[2px]">工作簿1 - ...</span>
      </button>
      <div className="flex gap-8 px-[18px]">
        <button aria-label="OneNote"><OfficeIcon letter="N" color="#80397b" kind="note" /></button>
        <button aria-label="Outlook"><OfficeIcon letter="O" color="#0072c6" kind="outlook" /></button>
        <button aria-label="PowerPoint"><OfficeIcon letter="P" color="#d24726" kind="chart" /></button>
        <button aria-label="Word"><OfficeIcon letter="W" color="#2b579a" kind="lines" /></button>
      </div>
      <button className={taskButton + darkGlass + "w-[131px] pl-[7px]"}>
        <Svg w={41} h={40}>
          <path d="M15 3C-5 4-4 24 6 27l-1 6 6-4c22 2 25-26 4-26z" fill="#7bd63c" /><circle cx="9" cy="12" r="2.200" fill="#2a5a10" /><circle cx="20" cy="12" r="2.200" fill="#2a5a10" />
          <path d="M28 15c-16 1-16 20 1 20 2 0 4 0 5-1l5 3-1-5c6-5 2-17-10-17z" fill="#eee" /><circle cx="24" cy="22" r="1.600" fill="#777" /><circle cx="33" cy="22" r="1.600" fill="#777" />
        </Svg>
        微信
      </button>
      <span className="flex h-[46px] w-2 gap-[3px] border-r border-[#555]"><i className="h-full w-px bg-[#777]" /><i className="h-full w-px bg-[#666]" /></span>
      <button className={taskButton + darkGlass + "ml-1 w-[139px] pl-2"}>
        <Svg w={37} h={38} className="mr-[3px]">
          <path d="M9 1h19l8 8v28H9z" fill="#f5f5f5" /><path d="M28 1l8 8h-8z" fill="#bbb" />
          <path d="M0 2h26v11H0z" fill="#b01e2e" />
          <text x="13" y="11" textAnchor="middle" fontSize="9" fontWeight="700" fill="#fff" fontFamily="Noto Sans, sans-serif">PDF</text>
          <path d="M12 34c5-2 10-10 10-18 0 6 5 12 11 12-7-2-14 1-19 6z" stroke="#b01e2e" strokeWidth="1.800" />
        </Svg>
        Jing Zhe...
      </button>
      <button className={taskButton + darkGlass + "ml-1 w-[139px] pl-[7px]"}>
        <NeteaseIcon size={40} />
        此时此刻 ...
      </button>
      <div className="ml-auto flex h-full items-center">
        <SogouLogo size={20} />
        <Svg w={18} h={18} className="ml-5"><path d="M0 5h4l5-5v18l-5-5H0z" fill="#fff" /><path d="M12 5q3 4 0 8" stroke="#aaa" strokeWidth="1.500" /></Svg>
        <span className="ml-[10px]"><NeteaseIcon size={20} /></span>
        <Svg w={20} h={20} className="ml-[40px]"><path d="M0 2q5 0 10-2 5 2 10 2v7q-1 8-10 11Q1 17 0 9z" fill="#1f7bff" /><path d="M3 5h14L10 13zM5 12l5 4 5-4" stroke="#fff" strokeWidth="1.800" /></Svg>
        <Svg w={16} h={14} className="ml-3"><path d="M1.500 14v-3M4.500 14v-5M7.500 14V7M10.500 14V4M13.500 14V1" stroke="#fff" strokeWidth="2" /></Svg>
        <Svg w={19} h={19} className="ml-3"><path d="M1 3h8v15H1z" fill="#fff" stroke="#ccc" /><path d="M3 0h4v2H3zM11 6h7v4q0 3-3 3t-4-3z" fill="#fff" /><path d="M12.500 1v5M16.500 1v5M14.500 12v7" stroke="#fff" strokeWidth="1.500" /></Svg>
        <div className="ml-3 flex w-[134px] flex-col items-center pb-1 text-[15px] leading-[22px] whitespace-nowrap">
          <span>下午 5:43</span>
          <span>2019/8/11 星期日</span>
        </div>
        <button aria-label="显示桌面" className="ml-[6px] h-[46px] w-[14px] border border-[#777] bg-[linear-gradient(#777,#222_40%,#000)]" />
      </div>
    </nav>
  );
}

export default function App() {
  return (
    <div lang="zh-CN" className="relative flex h-screen flex-col overflow-hidden bg-[#e6e6e6] font-['Noto_Sans','Noto_Sans_CJK_SC',sans-serif]">
      <TitleBar />
      <TabBar />
      <Ribbon />
      <FormulaBar />
      <Sheet />
      <SheetTabs />
      <StatusBar />
      <Taskbar />
      <ImeBar />
      <SpeedWidget />
      <Callouts />
    </div>
  );
}
